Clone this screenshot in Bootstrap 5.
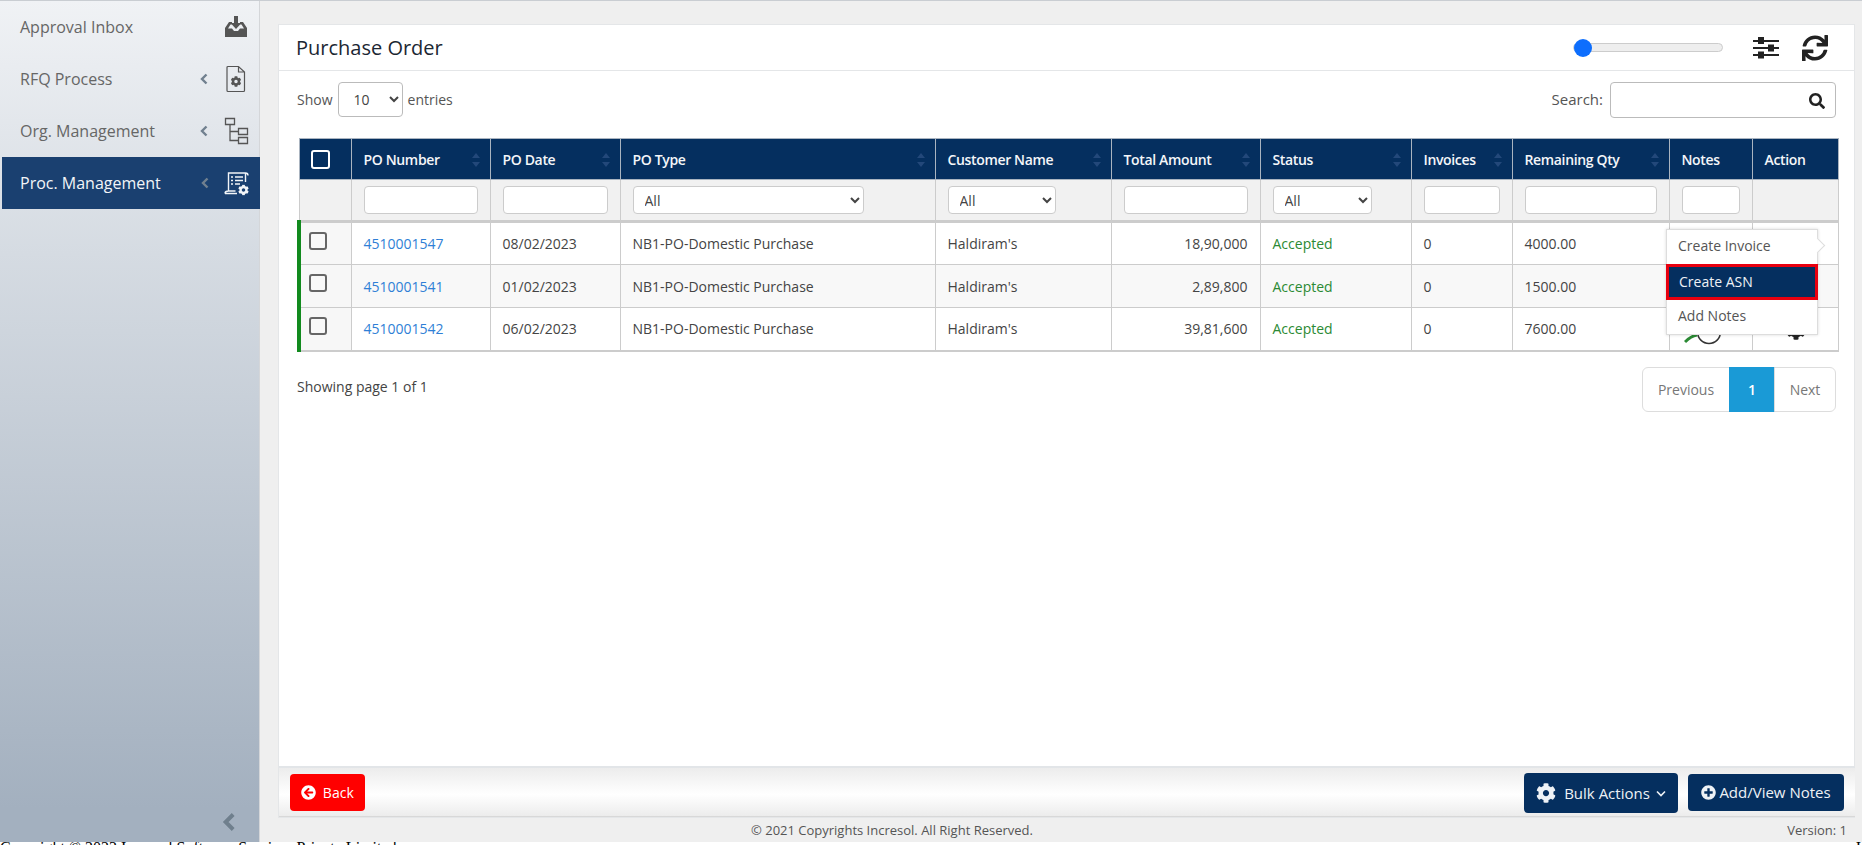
<!DOCTYPE html>
<html lang="en">
<head>
    <meta charset="UTF-8">
    <meta name="viewport" content="width=device-width, initial-scale=1.0">
    <title>Purchase Order</title>
    <link href="https://cdn.jsdelivr.net/npm/bootstrap@5.3.0/dist/css/bootstrap.min.css" rel="stylesheet">
    <style>
        html, body { height: 846px; overflow: hidden; }
        body { background: #fff; font-family: "Open Sans", "Liberation Sans", sans-serif; font-size: 14px; color: #444; }
        .app-shell { height: 842px; background: #efefef; border-top: 1px solid #c9cdd2; }

        .side-rail { width: 260px; flex: none; padding-left: 2px; background: linear-gradient(#f0f2f5, #d5dbe2 30%, #a3b0bf 96%); border-right: 1px solid #d4d6d9; position: relative; }
        .side-link { height: 52px; padding: 0 10px 0 18px; font-size: 16px; color: #666; text-decoration: none; }
        .side-link:hover { color: #666; }
        .side-link.is-on { background: #1a4070; color: #f2f5f8; margin-right: -1px; }
        .side-link span { flex-grow: 1; }
        .side-chev { width: 8px; height: 12px; margin-right: 15px; color: #71808f; }
        .side-ico { width: 26px; height: 28px; color: #555; }
        .is-on .side-ico { color: #f2f5f8; }
        .side-collapse { position: absolute; right: 23px; bottom: 10px; width: 14px; height: 20px; color: #6f7f8d; }

        .work-area { min-width: 0; padding: 23px 7px 0 18px; }
        .sheet { height: 794px; background: #fff; border: 1px solid #e4e6e8; }
        .sheet-head { height: 46px; padding: 0 26px 0 17px; border-bottom: 1px solid #e4e6e8; }
        .sheet-title { font-size: 20px; font-weight: 500; color: #1b2733; margin: 0; }
        .zoom-range { width: 150px; height: 18px; margin-right: 30px; -webkit-appearance: none; appearance: none; background: transparent; }
        .zoom-range::-webkit-slider-runnable-track { height: 9px; background: #eee; border: 1px solid #ccc; border-radius: 5px; }
        .zoom-range::-webkit-slider-thumb { -webkit-appearance: none; width: 18px; height: 18px; margin-top: -5.5px; border-radius: 50%; background: #0d6efd; }
        .head-ico { color: #222; }
        .ico-sliders { width: 26px; height: 22px; margin-right: 23px; }
        .ico-sync { width: 26px; height: 26px; }

        .sheet-body { padding: 10px 18px 0; }
        .entries-row { height: 37px; margin-bottom: 20px; color: #555; }
        .len-pick { width: 65px; height: 35px; margin: 0 5px; padding: 0 0 0 11px; font-size: 14px; color: #444; background-color: #fff; border: 1px solid #bbb; border-radius: 4px; }
        .search-wrap { position: relative; margin-left: 7px; }
        .search-box { width: 226px; height: 36px; border: 1px solid #bbb; border-radius: 4px; }
        .search-ico { position: absolute; right: 11px; top: 11px; width: 16px; height: 16px; color: #222; }
        .search-label { font-size: 15px; }

        .grid-wrap { position: relative; }
        .po-grid { table-layout: fixed; width: 1539px; margin: 0; border-collapse: collapse; color: #444; }
        .po-grid th, .po-grid td { border: 1px solid #ccc; padding: 0 12px; vertical-align: middle; white-space: nowrap; }
        .po-grid .head-row th { height: 41px; background: #052f5f; color: #f4f6f9; font-size: 14px; font-weight: 600; letter-spacing: -.35px; border-color: #aab4c0; position: relative; }
        .po-grid .filter-row td { height: 42px; background: #f1f1f1; border-bottom-width: 3px; }
        .po-grid .data-row td { height: 43px; background: #fff; }
        .po-grid .data-row:nth-child(even) td { background: #f8f8f8; }
        .po-grid .data-row td:first-child { background: #f7f7f7; border-left: 4px solid #128a1e; }
        .po-grid .data-row:last-child td { border-bottom-width: 2px; }
        .sort-mark { position: absolute; right: 10px; top: 14px; width: 8px; height: 14px; }
        .sort-mark::before, .sort-mark::after { content: ""; position: absolute; left: 0; border-left: 4px solid transparent; border-right: 4px solid transparent; }
        .sort-mark::before { top: 0; border-bottom: 5px solid #23487a; }
        .sort-mark::after { bottom: 0; border-top: 5px solid #23487a; }
        .flt-input, .flt-pick { display: block; height: 28px; width: 100%; font-size: 14px; color: #444; background-color: #fff; border: 1px solid #ccc; border-radius: 4px; padding: 0 7px; }
        .flt-wide { width: 231px; }
        .flt-cust { width: 108px; }
        .flt-stat { width: 99px; }
        .row-check { display: block; width: 18px; height: 18px; margin: 0 0 0 -1px; border: 2px solid #666; border-radius: 3px; background: #f8f8f8; appearance: none; -webkit-appearance: none; }
        .head-row .row-check { width: 19px; height: 19px; border-color: #fff; background: transparent; }
        .data-row .row-check { margin: -6px 0 0 -4px; }
        .po-link { color: #2f7fd6; text-decoration: none; }
        .st-ok { color: #2b8a34; }
        .note-ico { display: block; width: 44px; height: 28px; margin: 6px 0 0 2px; }
        .gear-ico { display: block; width: 20px; height: 20px; margin: 2px 0 0 21px; color: #222; }

        .row-menu.dropdown-menu { display: block; position: absolute; left: 1369px; top: 91px; width: 152px; min-width: 0; padding: 0; font-size: 14px; border: 1px solid #ddd; border-radius: 0; box-shadow: 0 0 3px rgba(0,0,0,.15); }
        .row-menu::after { content: ""; position: absolute; right: -6px; top: 10px; width: 11px; height: 11px; background: #fff; border-top: 1px solid #ddd; border-right: 1px solid #ddd; transform: rotate(45deg) ; }
        .row-menu .dropdown-item { height: 34px; padding: 0 11px; line-height: 32px; color: #555; position: relative; z-index: 1; }
        .row-menu .dropdown-item.active, .row-menu .dropdown-item.active:hover { height: 36px; margin: 0 -1px; width: 152px; padding: 0 10px; line-height: 30px; background: #052f5f; color: #eef2f6; border: 3px solid #e8000f; }

        .pager-row { margin-top: 15px; }
        .page-note { font-weight: 500; margin-top: 9px; }
        .pg-strip .page-link { height: 45px; padding: 0; line-height: 43px; text-align: center; font-size: 14px; color: #777; border-color: #ddd; }
        .pg-strip .page-item:nth-child(1) .page-link { width: 88px; }
        .pg-strip .page-item:nth-child(2) .page-link { width: 46px; font-weight: 600; color: #fff; background: #1a9ad6; border-color: #1a9ad6; }
        .pg-strip .page-item:nth-child(3) .page-link { width: 62px; }

        .sheet-foot { height: 51px; padding: 0 11px; margin-right: -1px; background: linear-gradient(#ececec, #fff 55%, #ececec); border-top: 2px solid #e2e5e8; border-bottom: 1px solid #d8d8d8; }
        .btn-back { height: 37px; width: 75px; padding: 0; font-size: 14px; color: #fff; background: #f00; border: 0; border-radius: 4px; }
        .btn-back:hover { background: #f00; color: #fff; }
        .btn-navy { height: 38px; padding: 0; font-size: 14px; color: #eef2f6; background: #052f5f; border: 0; border-radius: 4px; }
        .btn-navy:hover { background: #052f5f; color: #eef2f6; }
        .btn-bulk { width: 154px; height: 40px; margin: 2px 10px 0 0; font-size: 15px; }
        .btn-notes { width: 156px; height: 37px; font-size: 15px; }
        .btn-ico { width: 15px; height: 15px; margin-right: 3px; vertical-align: -2px; }
        .btn-ico-lg { width: 20px; height: 20px; margin-right: 8px; vertical-align: -4px; }
        .btn-caret { width: 10px; height: 7px; margin-left: 6px; vertical-align: 2px; }

        .foot-line { height: 24px; padding: 3px 8px 0 473px; font-size: 13px; color: #555; }
        .legal-strip { height: 3px; overflow: hidden; font-family: "Liberation Serif", serif; font-size: 16px; line-height: 16px; color: #000; padding-right: 1px; }
        .legal-strip span { display: block; margin-top: -2px; }
    </style>
</head>
<body>

<svg width="0" height="0" class="position-absolute">
    <symbol id="i-cog" viewBox="0 0 512 512"><path fill="currentColor" d="M487.4 315.7l-42.6-24.6c4.3-23.2 4.3-47 0-70.2l42.6-24.6c4.9-2.8 7.1-8.6 5.5-14-11.1-35.6-30-67.8-54.7-94.6-3.8-4.1-10-5.1-14.8-2.3L380.8 110c-17.9-15.4-38.5-27.3-60.8-35.1V25.8c0-5.6-3.9-10.5-9.4-11.7-36.7-8.2-74.3-7.8-109.2 0-5.5 1.2-9.4 6.1-9.4 11.7V75c-22.2 7.9-42.8 19.8-60.8 35.1L88.7 85.5c-4.9-2.8-11-1.9-14.8 2.3-24.7 26.7-43.6 58.9-54.7 94.6-1.7 5.4.6 11.2 5.5 14L67.3 221c-4.3 23.2-4.3 47 0 70.2l-42.6 24.6c-4.9 2.8-7.1 8.6-5.5 14 11.1 35.6 30 67.8 54.7 94.6 3.8 4.1 10 5.1 14.8 2.3l42.6-24.6c17.9 15.4 38.5 27.3 60.8 35.1v49.2c0 5.6 3.9 10.5 9.4 11.7 36.7 8.2 74.3 7.8 109.2 0 5.5-1.2 9.4-6.1 9.4-11.7v-49.2c22.2-7.9 42.8-19.8 60.8-35.1l42.6 24.6c4.9 2.8 11 1.9 14.8-2.3 24.7-26.7 43.6-58.9 54.7-94.6 1.5-5.5-.7-11.3-5.6-14.1zM256 336c-44.1 0-80-35.9-80-80s35.9-80 80-80 80 35.9 80 80-35.9 80-80 80z"/></symbol>
    <symbol id="i-chev" viewBox="0 0 8 12"><path fill="none" stroke="currentColor" stroke-width="2.4" d="M6.5 1.5 2 6l4.500 4.500"/></symbol>
    <symbol id="i-note" viewBox="0 0 44 28"><path fill="none" stroke="#2b8a34" stroke-width="3" d="M1 24c3-3 6-6 12-7"/><circle cx="25" cy="14" r="11.500" fill="#fff" stroke="#333" stroke-width="1.500"/><path stroke="#d33" stroke-width="1.500" d="M25 6v9"/></symbol>
</svg>

<div class="app-shell d-flex">
    <aside class="side-rail">
        <nav class="d-flex flex-column">
            <a class="side-link d-flex align-items-center" href="#">
                <span>Approval Inbox</span>
                <svg class="side-ico" viewBox="0 0 26 28"><path fill="currentColor" d="M2 15 6 9h3v2.500H7.500L5 15.500h4l2 2.500h4l2-2.500h4l-2.500-4H17V9h3l4 6v9H2zM11 3h4v7h3.500L13 16 7.500 10H11z"/></svg>
            </a>
            <a class="side-link d-flex align-items-center" href="#">
                <span>RFQ Process</span>
                <svg class="side-chev"><use href="#i-chev"/></svg>
                <svg class="side-ico" viewBox="0 0 26 28"><path fill="none" stroke="currentColor" stroke-width="1.200" d="M5 1.500h10.500L21.500 7v18.500a1 1 0 0 1-1 1H5a1 1 0 0 1-1-1V2.500a1 1 0 0 1 1-1zM15.500 1.500V7h6"/><use href="#i-cog" x="7.500" y="11" width="11" height="11"/></svg>
            </a>
            <a class="side-link d-flex align-items-center" href="#">
                <span>Org. Management</span>
                <svg class="side-chev"><use href="#i-chev"/></svg>
                <svg class="side-ico" viewBox="0 0 26 28"><path fill="none" stroke="currentColor" stroke-width="1.300" d="M2.500 1.500h9v6h-9zM15.500 11.500h9v6h-9zM15.500 20.500h9v6h-9zM7 7.500v16h8.500M7 14.500h8.500"/></svg>
            </a>
            <a class="side-link is-on d-flex align-items-center" href="#">
                <span>Proc. Management</span>
                <svg class="side-chev"><use href="#i-chev"/></svg>
                <svg class="side-ico" viewBox="0 0 26 28"><path fill="none" stroke="currentColor" stroke-width="1.400" d="M4.500 22V4h17c1.500 0 2.500 1 2.500 2.500M21.500 4v9M1 24.500h12M1 24.500c0-1.500 1-2.500 3.500-2.500h7"/><path stroke="currentColor" stroke-width="1.500" d="M7 8h2M11 8h8M7 11.500h2M11 11.500h8M7 15h2M11 15h5"/><use href="#i-cog" x="14" y="15.500" width="11" height="11"/></svg>
            </a>
        </nav>
        <svg class="side-collapse" viewBox="0 0 8 12"><use href="#i-chev"/></svg>
    </aside>

    <main class="work-area flex-grow-1">
        <section class="sheet d-flex flex-column">
            <header class="sheet-head d-flex align-items-center">
                <h1 class="sheet-title flex-grow-1">Purchase Order</h1>
                <input type="range" class="zoom-range" min="0" max="100" value="0">
                <svg class="head-ico ico-sliders" viewBox="0 0 26 22"><path stroke="currentColor" stroke-width="2" d="M0 4h26M0 11h26M0 18h26"/><path fill="currentColor" d="M5 0h6v7H5zM15 7.500h6v7h-6zM5 14.500h6v7H5z"/></svg>
                <svg class="head-ico ico-sync" viewBox="0 0 512 512"><path fill="currentColor" d="M440.65 12.57l4 82.77A247.16 247.16 0 0 0 255.83 8C134.73 8 33.91 94.92 12.29 209.82A12 12 0 0 0 24.09 224h49.05a12 12 0 0 0 11.67-9.26 175.91 175.91 0 0 1 317-56.94l-101.46-4.86a12 12 0 0 0-12.57 12v47.41a12 12 0 0 0 12 12H500a12 12 0 0 0 12-12V12a12 12 0 0 0-12-12h-47.37a12 12 0 0 0-11.98 12.57zM255.83 432a175.61 175.61 0 0 1-146-77.8l101.8 4.87a12 12 0 0 0 12.57-12v-47.4a12 12 0 0 0-12-12H12a12 12 0 0 0-12 12V500a12 12 0 0 0 12 12h47.35a12 12 0 0 0 12-12.6l-4.15-82.57A247.17 247.17 0 0 0 255.83 504c121.11 0 221.93-86.92 243.55-201.82a12 12 0 0 0-11.8-14.18h-49.05a12 12 0 0 0-11.67 9.26A175.86 175.86 0 0 1 255.83 432z"/></svg>
            </header>

            <div class="sheet-body flex-grow-1">
                <div class="entries-row d-flex align-items-center justify-content-between">
                    <div class="d-flex align-items-center">Show
                        <select class="len-pick"><option>10</option><option>25</option></select>
                        entries</div>
                    <div class="d-flex align-items-center">
                        <span class="search-label">Search:</span>
                        <div class="search-wrap">
                            <input type="text" class="search-box d-block">
                            <svg class="search-ico" viewBox="0 0 512 512"><path fill="currentColor" d="M505 442.7L405.3 343c-4.500-4.500-10.600-7-17-7H372c27.600-35.300 44-79.700 44-128C416 93.100 322.900 0 208 0S0 93.100 0 208s93.100 208 208 208c48.300 0 92.700-16.400 128-44v16.300c0 6.400 2.500 12.500 7 17l99.700 99.700c9.400 9.400 24.600 9.400 33.900 0l28.300-28.300c9.400-9.400 9.400-24.600.1-34zM208 336c-70.700 0-128-57.200-128-128 0-70.700 57.200-128 128-128 70.700 0 128 57.200 128 128 0 70.700-57.200 128-128 128z"/></svg>
                        </div>
                    </div>
                </div>

                <div class="grid-wrap">
                    <table class="table po-grid">
                        <colgroup>
                            <col class="c1"><col><col><col><col><col><col><col><col><col><col>
                        </colgroup>
                        <thead>
                            <tr class="head-row">
                                <th style="width:52px"><input type="checkbox" class="row-check"></th>
                                <th style="width:139px">PO Number<i class="sort-mark"></i></th>
                                <th style="width:130px">PO Date<i class="sort-mark"></i></th>
                                <th style="width:315px">PO Type<i class="sort-mark"></i></th>
                                <th style="width:176px">Customer Name<i class="sort-mark"></i></th>
                                <th style="width:149px">Total Amount<i class="sort-mark"></i></th>
                                <th style="width:151px">Status<i class="sort-mark"></i></th>
                                <th style="width:101px">Invoices<i class="sort-mark"></i></th>
                                <th style="width:157px">Remaining Qty<i class="sort-mark"></i></th>
                                <th style="width:83px">Notes</th>
                                <th style="width:86px">Action</th>
                            </tr>
                            <tr class="filter-row">
                                <td></td>
                                <td><input type="text" class="flt-input"></td>
                                <td><input type="text" class="flt-input"></td>
                                <td><select class="flt-pick flt-wide"><option>All</option></select></td>
                                <td><select class="flt-pick flt-cust"><option>All</option></select></td>
                                <td><input type="text" class="flt-input"></td>
                                <td><select class="flt-pick flt-stat"><option>All</option></select></td>
                                <td><input type="text" class="flt-input"></td>
                                <td><input type="text" class="flt-input"></td>
                                <td><input type="text" class="flt-input"></td>
                                <td></td>
                            </tr>
                        </thead>
                        <tbody>
                            <tr class="data-row">
                                <td><input type="checkbox" class="row-check"></td>
                                <td><a class="po-link" href="#">4510001547</a></td>
                                <td>08/02/2023</td>
                                <td>NB1-PO-Domestic Purchase</td>
                                <td>Haldiram's</td>
                                <td class="text-end">18,90,000</td>
                                <td class="st-ok">Accepted</td>
                                <td>0</td>
                                <td>4000.00</td>
                                <td><svg class="note-ico"><use href="#i-note"/></svg></td>
                                <td><svg class="gear-ico"><use href="#i-cog"/></svg></td>
                            </tr>
                            <tr class="data-row">
                                <td><input type="checkbox" class="row-check"></td>
                                <td><a class="po-link" href="#">4510001541</a></td>
                                <td>01/02/2023</td>
                                <td>NB1-PO-Domestic Purchase</td>
                                <td>Haldiram's</td>
                                <td class="text-end">2,89,800</td>
                                <td class="st-ok">Accepted</td>
                                <td>0</td>
                                <td>1500.00</td>
                                <td><svg class="note-ico"><use href="#i-note"/></svg></td>
                                <td><svg class="gear-ico"><use href="#i-cog"/></svg></td>
                            </tr>
                            <tr class="data-row">
                                <td><input type="checkbox" class="row-check"></td>
                                <td><a class="po-link" href="#">4510001542</a></td>
                                <td>06/02/2023</td>
                                <td>NB1-PO-Domestic Purchase</td>
                                <td>Haldiram's</td>
                                <td class="text-end">39,81,600</td>
                                <td class="st-ok">Accepted</td>
                                <td>0</td>
                                <td>7600.00</td>
                                <td><svg class="note-ico"><use href="#i-note"/></svg></td>
                                <td><svg class="gear-ico"><use href="#i-cog"/></svg></td>
                            </tr>
                        </tbody>
                    </table>
                    <div class="row-menu dropdown-menu show">
                        <a class="dropdown-item" href="#">Create Invoice</a>
                        <a class="dropdown-item active" href="#">Create ASN</a>
                        <a class="dropdown-item" href="#">Add Notes</a>
                    </div>
                </div>

                <div class="pager-row d-flex justify-content-between align-items-start">
                    <div class="page-note">Showing page 1 of 1</div>
                    <ul class="pagination pg-strip m-0">
                        <li class="page-item"><a class="page-link" href="#">Previous</a></li>
                        <li class="page-item"><a class="page-link" href="#">1</a></li>
                        <li class="page-item"><a class="page-link" href="#">Next</a></li>
                    </ul>
                </div>
            </div>

            <footer class="sheet-foot d-flex align-items-center justify-content-between">
                <button class="btn btn-back"><svg class="btn-ico" viewBox="0 0 512 512"><path fill="currentColor" d="M256 504C119 504 8 393 8 256S119 8 256 8s248 111 248 248-111 248-248 248zm28.900-143.600L209.400 288H392c13.300 0 24-10.700 24-24v-16c0-13.300-10.700-24-24-24H209.400l75.500-72.400c9.700-9.300 9.900-24.800.4-34.300l-11-10.900c-9.400-9.400-24.600-9.400-33.900 0L107.700 239c-9.400 9.400-9.400 24.600 0 33.900l132.700 132.700c9.400 9.400 24.600 9.400 33.900 0l11-10.900c9.500-9.500 9.300-25-.4-34.300z"/></svg> Back</button>
                <div class="d-flex align-items-center">
                    <button class="btn btn-navy btn-bulk"><svg class="btn-ico-lg"><use href="#i-cog"/></svg>Bulk Actions<svg class="btn-caret" viewBox="0 0 10 7"><path fill="none" stroke="currentColor" stroke-width="1.600" d="M1 1.500 5 5.500l4-4"/></svg></button>
                    <button class="btn btn-navy btn-notes"><svg class="btn-ico" viewBox="0 0 512 512"><path fill="currentColor" d="M256 8C119 8 8 119 8 256s111 248 248 248 248-111 248-248S393 8 256 8zm144 276c0 6.600-5.400 12-12 12h-92v92c0 6.600-5.400 12-12 12h-56c-6.600 0-12-5.400-12-12v-92h-92c-6.600 0-12-5.400-12-12v-56c0-6.600 5.400-12 12-12h92v-92c0-6.600 5.400-12 12-12h56c6.600 0 12 5.400 12 12v92h92c6.600 0 12 5.400 12 12v56z"/></svg>Add/View Notes</button>
                </div>
            </footer>
        </section>
        <div class="foot-line d-flex justify-content-between">
            <span>© 2021 Copyrights Incresol. All Right Reserved.</span>
            <span>Version: 1</span>
        </div>
    </main>
</div>
<div class="legal-strip d-flex justify-content-between">
    <span>Copyright © 2023 Incresol Software Services Private Limited</span>
    <span>I</span>
</div>

<script src="https://cdn.jsdelivr.net/npm/bootstrap@5.3.0/dist/js/bootstrap.bundle.min.js"></script>
</body>
</html>
